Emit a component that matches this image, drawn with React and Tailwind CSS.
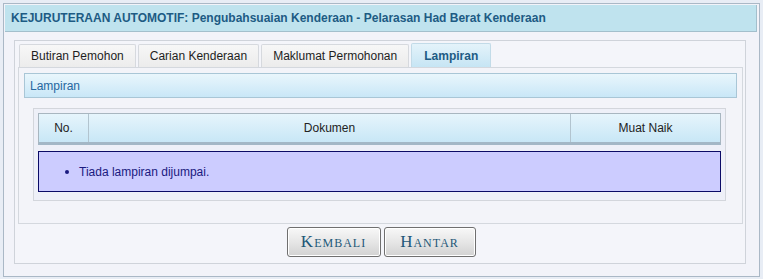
const tabs = ["Butiran Pemohon", "Carian Kenderaan", "Maklumat Permohonan"];

export default function App() {
  return (
    <div className="w-[763px] h-[279px] bg-[#e8edf5] p-[3px] font-['Liberation_Sans',Arial,sans-serif] text-[12px]">
      <div className="h-[274px] border border-[#aab8c6] bg-[#f2f3f9] flex flex-col">
        {/* title bar */}
        <div className="ml-px mr-[2px] mt-px h-[27px] bg-[#bfe3ee] border-r border-b border-[#a3bfcc] flex items-center pl-[6px]">
          <span className="font-bold text-[#1d5b84]">
            KEJURUTERAAN AUTOMOTIF: Pengubahsuaian Kenderaan - Pelarasan Had Berat Kenderaan
          </span>
        </div>

        {/* tab box */}
        <div className="ml-[10px] mt-[8px] w-[732px] h-[224px] border border-[#cfd3da] bg-[#f4f5fa] flex flex-col">
          <div className="flex items-end gap-[2px] pl-[4px] pt-[3px] h-[26px]">
            {tabs.map((t) => (
              <div
                key={t}
                className="h-[23px] px-[11px] flex items-center border border-b-0 border-[#d6d9de] bg-gradient-to-b from-[#f7f7f7] to-[#ececec] text-[#1e1e1e] rounded-t-[2px]"
              >
                {t}
              </div>
            ))}
            <div className="h-[24px] px-[12px] flex items-center border border-b-0 border-[#c2dbe8] bg-gradient-to-b from-[#e4f3fa] to-[#c6e5f4] font-bold text-[#1d5b84] rounded-t-[2px]">
              Lampiran
            </div>
          </div>

          <div className="ml-[3px] w-[725px] h-[157px] border border-[#d4d8de] bg-[#f3f4f9] px-[5px] pt-[5px]">
            <div className="h-[25px] border border-[#a9c6d6] bg-gradient-to-b from-[#e9f6fc] to-[#c9e7f7] flex items-center pl-[5px] text-[#2667a0]">
              Lampiran
            </div>

            <div className="mt-[10px] ml-[9px] w-[693px] h-[93px] border border-[#d3d6dc] bg-[#eef0f8] p-[4px]">
              <div className="flex h-[32px] border border-[#a8b6c0] border-b-[3px] border-b-[#a3b7c6] bg-gradient-to-b from-[#e6f5fc] to-[#c8e7f6] text-[#222]">
                <div className="w-[50px] flex items-center justify-center border-r border-[#b2c4cf]">No.</div>
                <div className="w-[482px] flex items-center justify-center border-r border-[#b2c4cf]">Dokumen</div>
                <div className="flex-1 flex items-center justify-center">Muat Naik</div>
              </div>
              <div className="mt-[6px] h-[41px] border border-[#0b0b66] bg-[#ccccff] flex items-center pl-[26px] text-[#1a1a80]">
                <span className="w-[4px] h-[4px] rounded-full bg-[#1a1a80] mr-[10px]" />
                Tiada lampiran dijumpai.
              </div>
            </div>
          </div>

          {/* buttons */}
          <div className="flex justify-center gap-[3px] mt-[3px] pl-[2px]">
            {["Kembali", "Hantar"].map((b) => (
              <button
                key={b}
                className={`${b === "Kembali" ? "w-[94px]" : "w-[92px]"} h-[30px] border border-[#6f6f6f] rounded-[3px] bg-gradient-to-b from-[#f8f8f8] via-[#e6e6e6] to-[#d2d2d2] shadow-[inset_0_0_0_1px_#ffffff] font-['Liberation_Serif',serif] [font-variant:small-caps] text-[17px] tracking-[1px] text-[#1e5878]`}
              >
                {b}
              </button>
            ))}
          </div>
        </div>
      </div>
    </div>
  );
}
